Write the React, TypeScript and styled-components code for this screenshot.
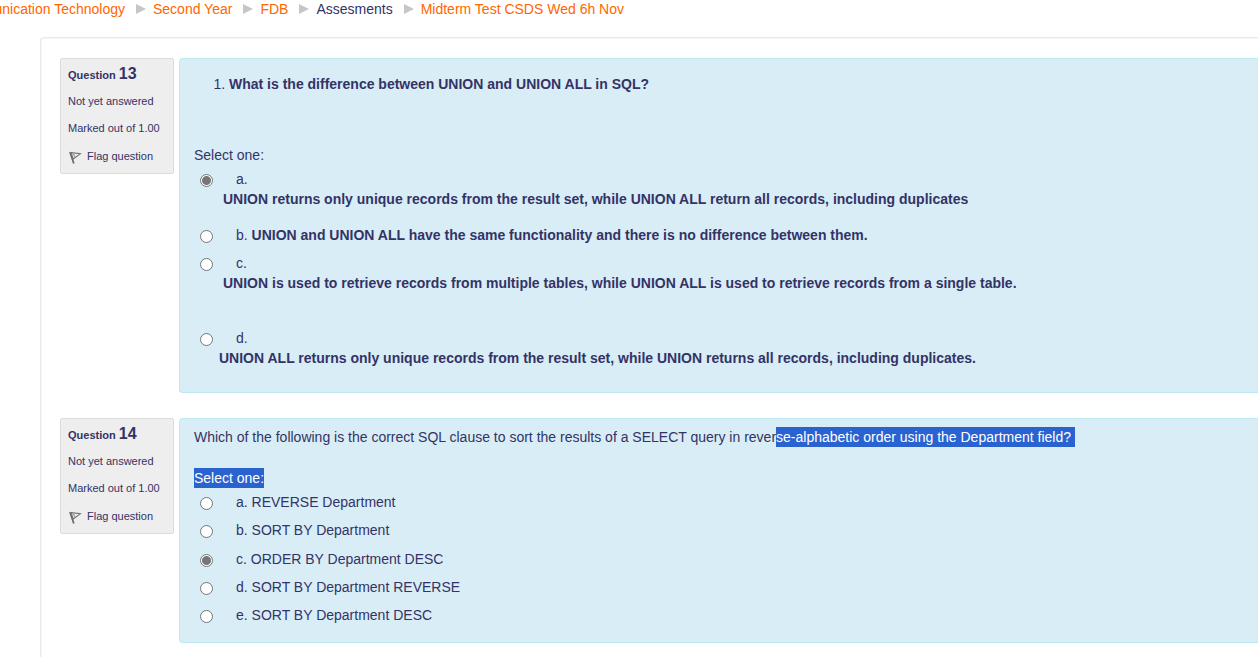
import React from "react";
import styled, { createGlobalStyle } from "styled-components";

const GlobalStyle = createGlobalStyle`
  * { box-sizing: border-box; }
  body {
    margin: 0;
    background: #fff;
    color: #333366;
    font: 14px/20px "Liberation Sans", Arial, sans-serif;
    overflow-x: hidden;
  }
`;

const Page = styled.div`
  overflow: hidden;
`;

const Trail = styled.ol`
  display: flex;
  align-items: center;
  margin: -1px 0 18px;
  padding: 0;
  list-style: none;
  white-space: nowrap;
`;

const Crumb = styled.li<{ $cut?: boolean }>`
  display: flex;
  align-items: center;
  justify-content: flex-end;
  width: ${(p) => (p.$cut ? "125px" : "auto")};
`;

const CrumbLink = styled.a`
  color: #ff6600;
  text-decoration: none;
`;

const Arrow = styled.svg`
  flex: none;
  width: 10px;
  height: 10px;
  margin: 0 7px 0 11px;
  fill: #c6c6c6;
`;

const Card = styled.main`
  margin-left: 40px;
  padding: 20px 0 14px 19px;
  border: 1px solid #eaeaea;
  border-right: 0;
  border-bottom: 0;
  border-top-left-radius: 4px;
  box-shadow: inset 1px 1px 0 #f6f6f6;
  display: flex;
  flex-direction: column;
  gap: 25px;
`;

const Question = styled.section`
  display: grid;
  grid-template-columns: 114px 1fr;
  gap: 5px;
  align-items: start;
`;

const Info = styled.aside`
  display: flex;
  flex-direction: column;
  align-items: flex-start;
  gap: 7px;
  height: 116px;
  padding: 5px 7px;
  border: 1px solid #dcdcdc;
  border-radius: 2px;
  background: #eeeeee;
  font-size: 11px;
  white-space: nowrap;
`;

const InfoTitle = styled.h3`
  margin: 0 0 -1px;
  font-size: 11px;
  line-height: 20px;
`;

const QuestionNumber = styled.span`
  font-size: 16px;
`;

const InfoLine = styled.div`
  line-height: 20px;
`;

const FlagButton = styled.button`
  display: flex;
  align-items: center;
  gap: 5px;
  margin: 1px 0 0;
  padding: 0;
  border: 0;
  background: none;
  color: inherit;
  font: inherit;
  line-height: 20px;
  cursor: pointer;
`;

const FlagIcon = styled.svg`
  width: 14px;
  height: 14px;
  margin-top: 2px;
`;

const Content = styled.div`
  padding: 15px 0 24px 14px;
  border: 1px solid #bce8f1;
  border-right: 0;
  border-radius: 4px 0 0 4px;
  background: #d9edf7;
  white-space: nowrap;
`;

const PlainContent = styled(Content)`
  padding-top: 8px;
  padding-bottom: 17px;
`;

const NumberedText = styled.ol`
  margin: 0 0 51px;
  padding-left: 35px;
`;

const QuestionText = styled.p`
  margin: 0 0 21px;
`;

const Choices = styled.fieldset`
  margin: 0;
  padding: 0;
  border: 0;
`;

const Prompt = styled.legend`
  padding: 0;
  margin-bottom: 4px;
`;

const Marked = styled.mark<{ $trail?: boolean }>`
  display: inline-block;
  padding-right: ${(p) => (p.$trail ? "4px" : "0")};
  background: #2a63d0;
  color: #fff;
`;

const EvenAnswers = styled.div`
  display: flex;
  flex-direction: column;
  justify-content: space-between;
  min-height: 133px;
`;

const Answer = styled.div<{ $after?: number }>`
  display: flex;
  align-items: flex-start;
  margin-bottom: ${(p) => p.$after ?? 0}px;
`;

const Radio = styled.input`
  flex: none;
  width: 13px;
  height: 13px;
  margin: 5px 6px 0;
  appearance: none;
  border: 1px solid #767676;
  border-radius: 50%;
  background: #fff;

  &:checked {
    background: radial-gradient(circle, #767676 4px, #fff 5px);
  }
`;

const Letter = styled.span`
  padding-left: 17px;
`;

const Detail = styled.strong<{ $indent?: boolean }>`
  display: block;
  padding-left: ${(p) => (p.$indent ? "4px" : "0")};
`;

function Separator() {
  return (
    <Arrow viewBox="0 0 10 10" aria-hidden="true">
      <path d="M0 0 L10 5 L0 10 Z" />
    </Arrow>
  );
}

function QuestionInfo({ number }: { number: number }) {
  return (
    <Info>
      <InfoTitle>
        Question <QuestionNumber>{number}</QuestionNumber>
      </InfoTitle>
      <InfoLine>Not yet answered</InfoLine>
      <InfoLine>Marked out of 1.00</InfoLine>
      <FlagButton type="button">
        <FlagIcon viewBox="0 0 14 14" fill="none" aria-hidden="true">
          <path d="M2 2 L5.8 13.4" stroke="#666" strokeWidth="1.7" />
          <path d="M3.2 2.6 L12.4 3.6 L5.2 9 Z" stroke="#777" strokeWidth="1.1" />
          <path d="M5.4 3.2 L6.6 6.8" stroke="#888" strokeWidth="1" />
        </FlagIcon>
        Flag question
      </FlagButton>
    </Info>
  );
}

type UnionChoice = {
  letter: string;
  text: string;
  inline?: boolean;
  indent?: boolean;
  after?: number;
};

const unionChoices: UnionChoice[] = [
  {
    letter: "a",
    text: "UNION returns only unique records from the result set, while UNION ALL return all records, including duplicates",
    indent: true,
    after: 16,
  },
  {
    letter: "b",
    text: "UNION and UNION ALL have the same functionality and there is no difference between them.",
    inline: true,
    after: 8,
  },
  {
    letter: "c",
    text: "UNION is used to retrieve records from multiple tables, while UNION ALL is used to retrieve records from a single table.",
    indent: true,
    after: 35,
  },
  {
    letter: "d",
    text: "UNION ALL returns only unique records from the result set, while UNION returns all records, including duplicates.",
  },
];

const sortChoices = [
  "a. REVERSE Department",
  "b. SORT BY Department",
  "c. ORDER BY Department DESC",
  "d. SORT BY Department REVERSE",
  "e. SORT BY Department DESC",
];

export default function App() {
  return (
    <Page>
      <GlobalStyle />
      <nav aria-label="Breadcrumb">
        <Trail>
          <Crumb $cut>
            <CrumbLink href="#technology">unication Technology</CrumbLink>
          </Crumb>
          <Crumb>
            <Separator />
            <CrumbLink href="#year">Second Year</CrumbLink>
          </Crumb>
          <Crumb>
            <Separator />
            <CrumbLink href="#fdb">FDB</CrumbLink>
          </Crumb>
          <Crumb>
            <Separator />
            Assesments
          </Crumb>
          <Crumb>
            <Separator />
            <CrumbLink href="#midterm">Midterm Test CSDS Wed 6h Nov</CrumbLink>
          </Crumb>
        </Trail>
      </nav>

      <Card>
        <Question>
          <QuestionInfo number={13} />
          <Content>
            <NumberedText>
              <li>
                <strong>What is the difference between UNION and UNION ALL in SQL?</strong>
              </li>
            </NumberedText>
            <Choices>
              <Prompt>Select one:</Prompt>
              {unionChoices.map((c) => (
                <Answer key={c.letter} $after={c.after}>
                  <Radio type="radio" name="q13" id={`q13${c.letter}`} defaultChecked={c.letter === "a"} />
                  <label htmlFor={`q13${c.letter}`}>
                    <Letter>{c.letter}. </Letter>
                    {c.inline ? <strong>{c.text}</strong> : <Detail $indent={c.indent}>{c.text}</Detail>}
                  </label>
                </Answer>
              ))}
            </Choices>
          </Content>
        </Question>

        <Question>
          <QuestionInfo number={14} />
          <PlainContent>
            <QuestionText>
              Which of the following is the correct SQL clause to sort the results of a SELECT query in rever
              <Marked $trail>se-alphabetic order using the Department field?</Marked>
            </QuestionText>
            <Choices>
              <Prompt>
                <Marked>Select one:</Marked>
              </Prompt>
              <EvenAnswers>
                {sortChoices.map((text, i) => (
                  <Answer key={text}>
                    <Radio type="radio" name="q14" id={`q14-${i}`} defaultChecked={i === 2} />
                    <label htmlFor={`q14-${i}`}>
                      <Letter>{text}</Letter>
                    </label>
                  </Answer>
                ))}
              </EvenAnswers>
            </Choices>
          </PlainContent>
        </Question>
      </Card>
    </Page>
  );
}
